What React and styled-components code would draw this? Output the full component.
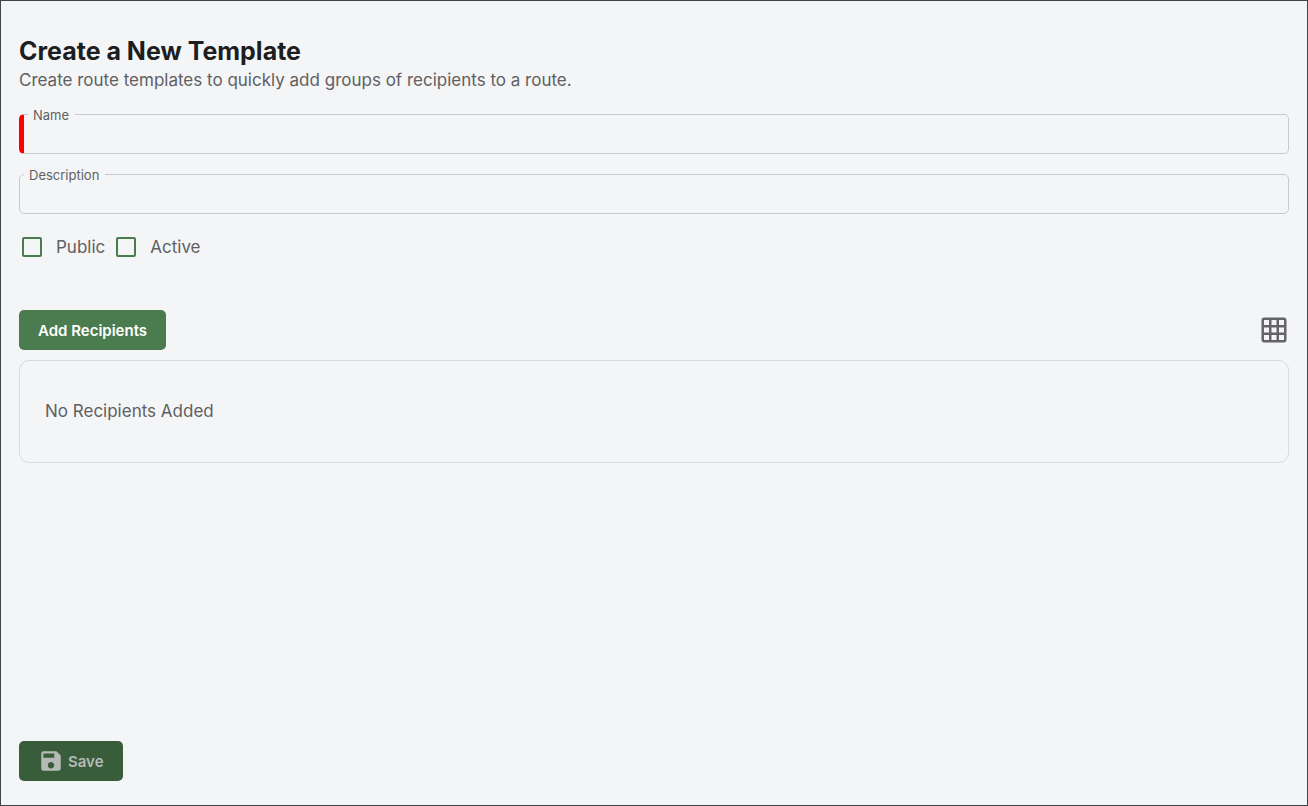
import React, { useState } from 'react';
import styled, { createGlobalStyle } from 'styled-components';
import { MdGridOn, MdSave } from 'react-icons/md';

const GlobalStyle = createGlobalStyle`
  * {
    box-sizing: border-box;
  }
  body {
    margin: 0;
    background: #f4f5f7;
    color: #5f6062;
    font-family: Inter, "Liberation Sans", sans-serif;
    font-size: 17px;
    line-height: 24px;
  }
`;

const Page = styled.main`
  display: flex;
  flex-direction: column;
  min-height: 100vh;
  padding: 35px 18px 24px;
  border: 1px solid #424345;
`;

const Title = styled.h1`
  margin: 0 0 2px;
  color: #1c1e20;
  font-size: 25px;
  font-weight: 700;
  line-height: 30px;
`;

const Subtitle = styled.p`
  margin: 0 0 13px;
`;

const Field = styled.fieldset`
  min-width: 0;
  height: 49px;
  margin: 0 0 11px;
  padding: 0 4px;
  border: 1px solid #c8c9cc;
  border-left: ${props => props.$required ? '5px solid #ff0000' : '1px solid #c8c9cc'};
  border-radius: 5px;
`;

const Legend = styled.legend`
  padding: 2px 6px 0 5px;
  font-size: 13px;
  line-height: 16px;
`;

const TextInput = styled.input`
  display: block;
  width: 100%;
  height: 28px;
  padding: 0 8px;
  border: 0;
  outline: 0;
  background: transparent;
  color: #1c1e20;
  font: inherit;
`;

const Options = styled.div`
  display: flex;
  gap: 11px;
  margin: 10px 0 51px;
  padding-left: 3px;
`;

const CheckLabel = styled.label`
  display: flex;
  align-items: center;
  gap: 14px;
  cursor: pointer;
`;

const Checkbox = styled.input`
  appearance: none;
  width: 20px;
  height: 20px;
  margin: 0;
  border: 2px solid #4a7c50;
  border-radius: 2px;
  cursor: pointer;
  &:checked {
    background: #4a7c50;
  }
`;

const Toolbar = styled.div`
  display: flex;
  align-items: center;
  justify-content: space-between;
  margin-bottom: 10px;
`;

const Button = styled.button`
  display: flex;
  align-items: center;
  gap: 4px;
  height: 40px;
  padding: 0 19px;
  border: 0;
  border-radius: 5px;
  background: #4a7c50;
  color: #ffffff;
  font-family: inherit;
  font-size: 15px;
  font-weight: 600;
  cursor: pointer;
  &:disabled {
    background: #395c3b;
    color: #b5bab6;
    cursor: default;
  }
`;

const IconButton = styled.button`
  display: flex;
  margin: 0;
  padding: 0;
  border: 0;
  background: transparent;
  color: #646567;
  cursor: pointer;
`;

const Recipients = styled.section`
  padding: 38px 25px 39px;
  border: 1px solid #d9dadc;
  border-radius: 10px;
`;

const Footer = styled.footer`
  display: flex;
  margin-top: auto;
`;

const TextField = ({ id, label, required, value, onChange }) => (
  <Field $required={required}>
    <Legend>
      <label htmlFor={id}>{label}</label>
    </Legend>
    <TextInput id={id} type="text" value={value} onChange={e => onChange(e.target.value)} />
  </Field>
);

const CheckField = ({ label, checked, onChange }) => (
  <CheckLabel>
    <Checkbox type="checkbox" checked={checked} onChange={e => onChange(e.target.checked)} />
    {label}
  </CheckLabel>
);

export default function App() {
  const [name, setName] = useState('');
  const [description, setDescription] = useState('');
  const [isPublic, setIsPublic] = useState(false);
  const [active, setActive] = useState(false);

  return (
    <>
      <GlobalStyle />
      <Page>
        <Title>Create a New Template</Title>
        <Subtitle>Create route templates to quickly add groups of recipients to a route.</Subtitle>
        <TextField id="name" label="Name" required value={name} onChange={setName} />
        <TextField id="description" label="Description" value={description} onChange={setDescription} />
        <Options>
          <CheckField label="Public" checked={isPublic} onChange={setIsPublic} />
          <CheckField label="Active" checked={active} onChange={setActive} />
        </Options>
        <Toolbar>
          <Button type="button">Add Recipients</Button>
          <IconButton type="button" aria-label="Columns">
            <MdGridOn size={30} />
          </IconButton>
        </Toolbar>
        <Recipients>No Recipients Added</Recipients>
        <Footer>
          <Button type="submit" disabled={!name}>
            <MdSave size={26} />
            Save
          </Button>
        </Footer>
      </Page>
    </>
  );
}
